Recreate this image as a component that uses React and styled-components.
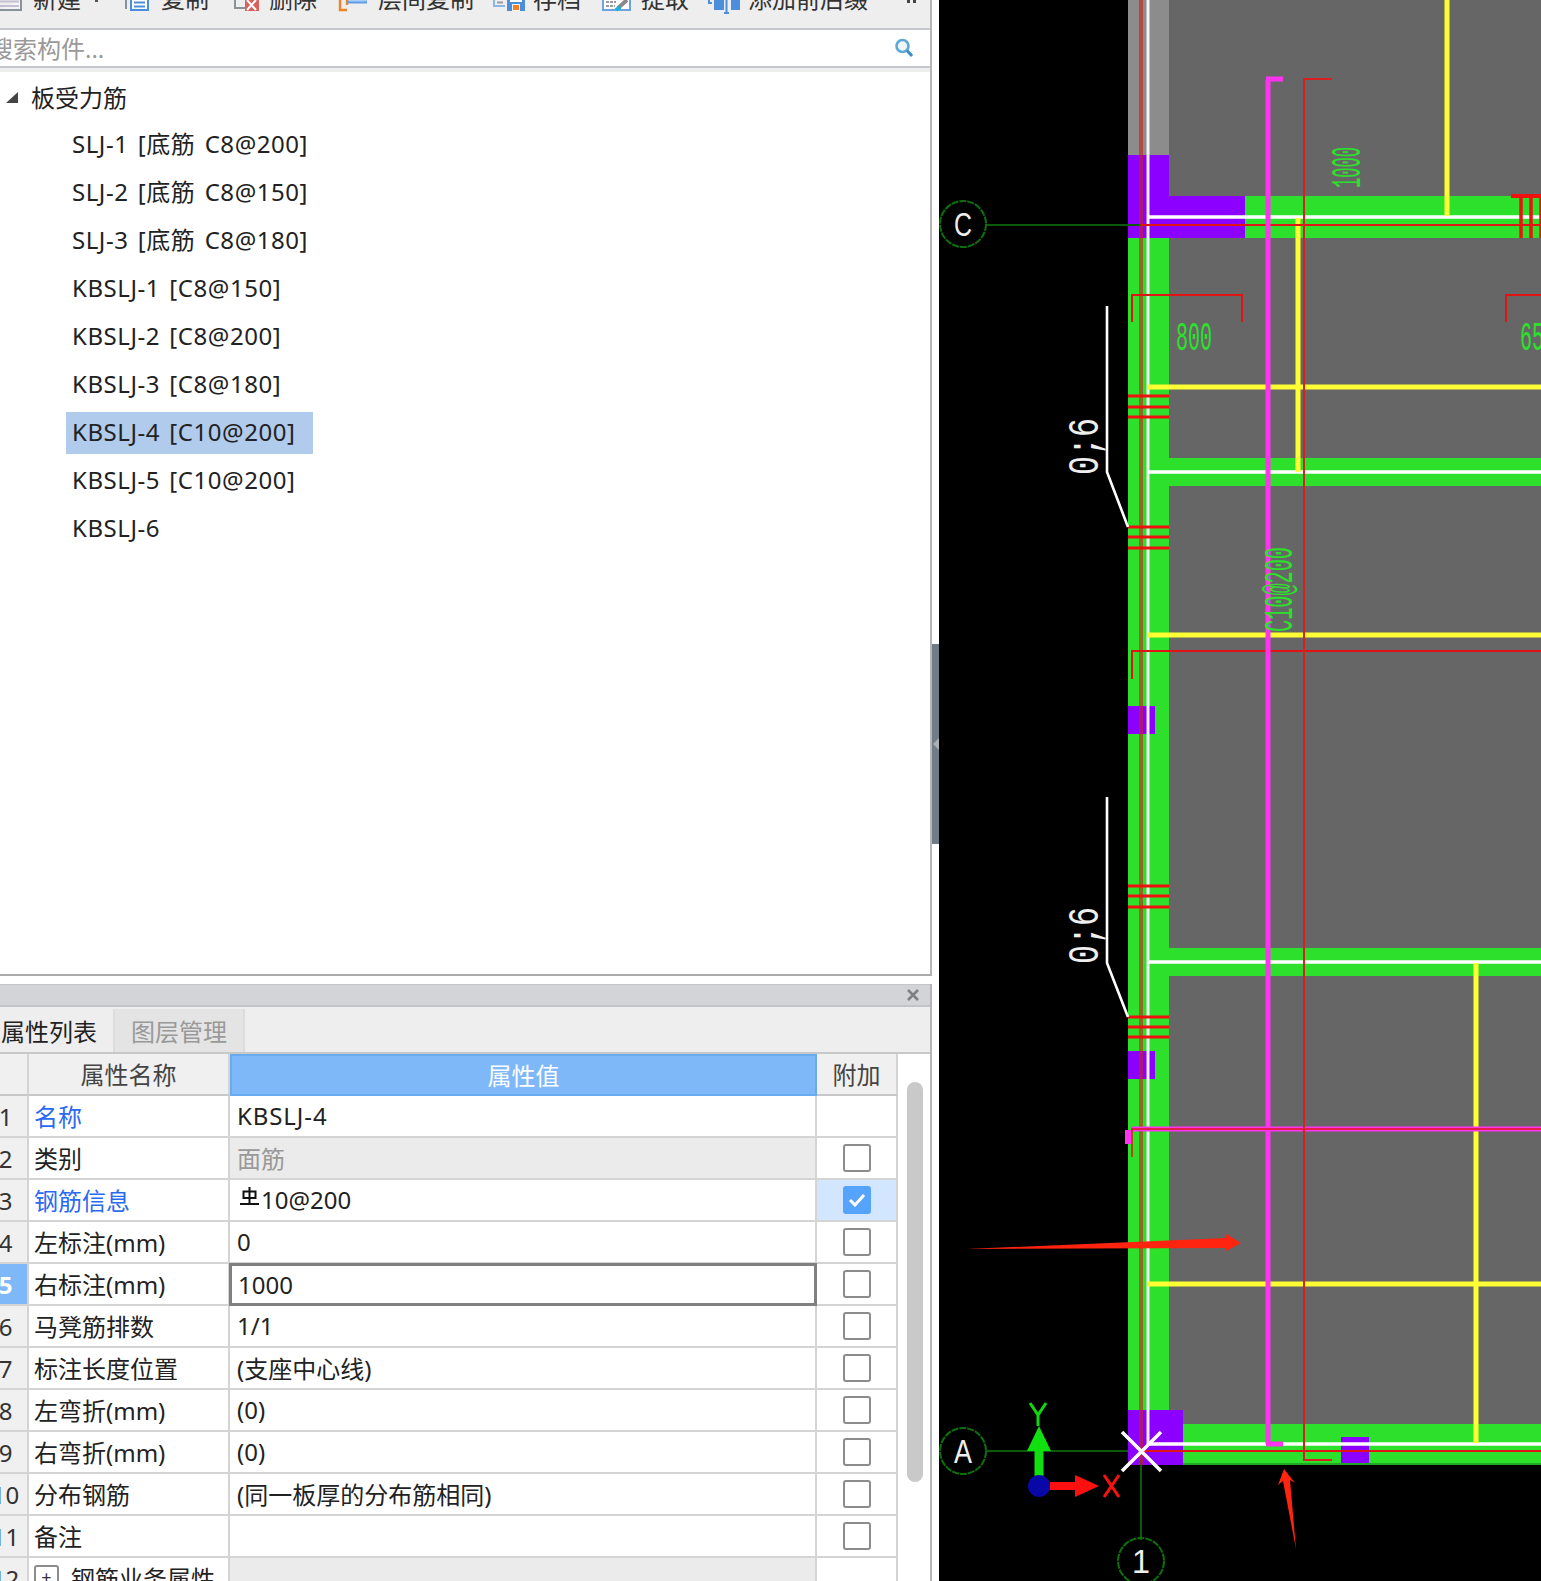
import React from 'react'
import styled, { createGlobalStyle } from 'styled-components'

const GlobalStyle = createGlobalStyle`
  html, body {
    margin: 0;
    padding: 0;
    background: #fff;
  }
  body {
    width: 1541px;
    height: 1581px;
    overflow: hidden;
    font-family: "Noto Sans", "Noto Sans CJK SC", sans-serif;
    font-size: 24px;
    color: #222;
  }
`

const Page = styled.div`
  display: flex;
  width: 1541px;
  height: 1581px;
  overflow: hidden;
`

const LeftColumn = styled.div`
  display: flex;
  flex-direction: column;
  width: 932px;
  flex: none;
`

const Gutter = styled.div`
  width: 7px;
  flex: none;
  padding-top: 644px;
  background: #fff;
`

const Grip = styled.div`
  position: relative;
  width: 7px;
  height: 200px;
  background: #6f7b86;
  &::after {
    content: '';
    position: absolute;
    left: 1px;
    top: 94px;
    border: 6px solid transparent;
    border-left-width: 0;
    border-right: 6px solid #aab0b6;
  }
`

const TreePanel = styled.div`
  display: flex;
  flex-direction: column;
  height: 976px;
  flex: none;
  border-right: 2px solid #b4b6b9;
  border-bottom: 2px solid #aaa;
  box-sizing: border-box;
`

const Toolbar = styled.div`
  display: flex;
  align-items: flex-end;
  height: 30px;
  flex: none;
  padding-bottom: 17px;
  box-sizing: border-box;
  background: #eee;
  border-bottom: 2px solid #c3c6ca;
  overflow: hidden;
`

const ToolButton = styled.div`
  display: flex;
  align-items: flex-end;
  flex: none;
  gap: ${p => p.$textGap}px;
  height: 24px;
  line-height: 24px;
  margin-left: ${p => p.$gap}px;
  color: #333;
  white-space: nowrap;
`

const Caret = styled.span`
  display: block;
  width: 3px;
  height: 3px;
  background: #555;
  margin: 0 0 9px 3px;
`

const More = styled.span`
  display: block;
  flex: none;
  width: 3px;
  height: 3px;
  margin: 0 0 8px 39px;
  border-left: 3px solid #444;
  border-right: 3px solid #444;
`

const SearchBar = styled.div`
  display: flex;
  align-items: center;
  justify-content: space-between;
  height: 38px;
  flex: none;
  box-sizing: border-box;
  padding-right: 16px;
  border-bottom: 2px solid #c3c6ca;
  background: #fff;
`

const Placeholder = styled.span`
  margin: -2px 0 0 -11px;
  color: #999;
`

const Strip = styled.div`
  height: 4px;
  flex: none;
  background: #eee;
`

const Tree = styled.div`
  flex: 1;
  padding-top: 1px;
  background: #fff;
`

const TreeRow = styled.div`
  display: flex;
  align-items: center;
  height: 48px;
  padding-left: ${p => p.$indent}px;
  color: #222;
`

const Expander = styled.span`
  width: 0;
  height: 0;
  margin-right: 13px;
  border-left: 12px solid transparent;
  border-bottom: 11px solid #444;
`

const RootLabel = styled.span`
  padding-bottom: 2px;
`

const NodeLabel = styled.span`
  display: block;
  height: 42px;
  line-height: 40px;
  padding: 0 ${p => (p.$selected ? 18 : 6)}px 0 6px;
  background: ${p => (p.$selected ? '#b0cbeb' : 'transparent')};
  white-space: nowrap;
  letter-spacing: 0.55px;
  word-spacing: 2.5px;
`

const PropsPanel = styled.div`
  display: flex;
  flex-direction: column;
  flex: 1;
  min-height: 0;
  margin-top: 8px;
  border-right: 2px solid #b4b6b9;
`

const TitleBar = styled.div`
  display: flex;
  align-items: center;
  justify-content: flex-end;
  height: 23px;
  flex: none;
  box-sizing: border-box;
  padding-right: 11px;
  background: #d3d4d8;
  border-top: 1px solid #c4c6ca;
  border-bottom: 2px solid #c2c4c8;
`

const TabRow = styled.div`
  display: flex;
  height: 47px;
  flex: none;
  box-sizing: border-box;
  background: #eee;
  border-bottom: 2px solid #c8c8c8;
`

const Tab = styled.div`
  display: flex;
  align-items: center;
  box-sizing: border-box;
  width: ${p => p.$width}px;
  padding: 0 0 1px ${p => p.$pad}px;
  margin-top: 2px;
  background: ${p => (p.$active ? '#eee' : '#e4e4e4')};
  color: ${p => (p.$active ? '#222' : '#999')};
  border-right: 2px solid #dcdcdc;
  white-space: nowrap;
`

const Body = styled.div`
  display: flex;
  flex: 1;
  min-height: 0;
`

const Grid = styled.div`
  width: 898px;
  flex: none;
`

const Row = styled.div`
  display: grid;
  grid-template-columns: 29px 201px 587px 81px;
  height: 42px;
`

const Cell = styled.div`
  display: flex;
  align-items: center;
  box-sizing: border-box;
  min-width: 0;
  overflow: hidden;
  white-space: nowrap;
  border-right: 2px solid #d4d4d4;
  border-bottom: 2px solid #d4d4d4;
`

const NumCell = styled(Cell)`
  justify-content: center;
  padding-right: 16px;
  background: ${p => (p.$active ? '#7eb8f8' : '#f0f0f0')};
  color: ${p => (p.$active ? '#fff' : '#333')};
  font-weight: ${p => (p.$active ? 700 : 400)};
`

const NameCell = styled(Cell)`
  padding: 0 0 2px 5px;
  background: #fff;
  color: ${p => (p.$link ? '#2a6af0' : '#222')};
`

const HeadCell = styled(Cell)`
  justify-content: center;
  padding-bottom: 2px;
  background: #f0f0f0;
  color: #444;
  border-bottom: 2px solid #c8c8c8;
`

const ValueHead = styled(HeadCell)`
  background: #7eb8f8;
  color: #fff;
  border: 2px solid #6aaaee;
`

const ValueCell = styled(Cell)`
  padding: 0 0 2px 7px;
  background: ${p => (p.$locked ? '#ebebeb' : '#fff')};
  color: ${p => (p.$locked ? '#999' : '#222')};
  letter-spacing: ${p => (p.$code ? '0.9px' : '0')};
  ${p => p.$editing && `
    padding: 0 0 0 6px;
    border: 3px solid #808080;
    margin: -1px 0 0 -1px;
  `}
`

const ExtraCell = styled(Cell)`
  justify-content: center;
  background: ${p => (p.$on ? '#d2e7ff' : '#fff')};
`

const CheckBox = styled.span`
  display: flex;
  align-items: center;
  justify-content: center;
  width: 28px;
  height: 28px;
  box-sizing: border-box;
  border-radius: 3px;
  border: 2px solid ${p => (p.$on ? '#55a3fb' : '#8c8c8c')};
  background: ${p => (p.$on ? '#55a3fb' : '#fff')};
`

const PlusBox = styled.span`
  display: flex;
  align-items: center;
  justify-content: center;
  width: 25px;
  height: 25px;
  margin-right: 12px;
  box-sizing: border-box;
  border: 2px solid #8c8c8c;
  border-radius: 3px;
  color: #333;
  font-size: 18px;
  line-height: 1;
`

const ScrollTrack = styled.div`
  flex: 1;
  padding: 28px 0 0 9px;
  background: #fff;
`

const ScrollThumb = styled.div`
  width: 16px;
  height: 400px;
  border-radius: 8px;
  background: #c9c9c9;
`

const Canvas = styled.div`
  flex: 1;
  min-width: 0;
  background: #000;
`

const DrawingSvg = styled.svg`
  display: block;
  width: 602px;
  height: 1581px;
`

const Icon = styled.svg`
  display: block;
  flex: none;
  overflow: visible;
`

const GradeMark = styled.svg`
  flex: none;
  margin: -6px 2px 0 3px;
`

const NewIcon = () => (
  <Icon width="22" height="11" viewBox="0 0 22 11">
    <path d="M21 0V10H0" fill="#f4f4f8" stroke="#8a9299" strokeWidth="2" />
    <path d="M0 1.5h19M0 6h19" stroke="#c5bfd2" strokeWidth="2" />
  </Icon>
)

const CopyIcon = () => (
  <Icon width="24" height="11" viewBox="0 0 24 11">
    <path d="M1 0v9" stroke="#8a9299" strokeWidth="2" />
    <path d="M6 0v10h17V0" fill="#fff" stroke="#4a8edc" strokeWidth="2" />
    <path d="M9 2.5h11M9 6.5h11" stroke="#4a8edc" strokeWidth="2" />
  </Icon>
)

const DeleteIcon = () => (
  <Icon width="27" height="11" viewBox="0 0 27 11">
    <path d="M3 0v8h10" fill="none" stroke="#8a9299" strokeWidth="2" />
    <rect x="13" y="0" width="14" height="11" fill="#d9605c" />
    <path d="M15 0l9 10M24 0l-9 10" stroke="#fff" strokeWidth="2" />
  </Icon>
)

const FloorCopyIcon = () => (
  <Icon width="28" height="11" viewBox="0 0 28 11">
    <path d="M1 0v10h7" fill="none" stroke="#f28029" strokeWidth="2.4" />
    <path d="M8 0v5" stroke="#f28029" strokeWidth="2.4" />
    <path d="M9 2h19" stroke="#5d9ee6" strokeWidth="3" />
    <path d="M10 0h17v1.5H10z" fill="#a8ccf5" />
  </Icon>
)

const SaveIcon = () => (
  <Icon width="32" height="11" viewBox="0 0 32 11">
    <path d="M1 0v6h11" fill="none" stroke="#8db6e6" strokeWidth="2" />
    <path d="M4 2.5h6" stroke="#9a9a9a" strokeWidth="2" />
    <rect x="14" y="0" width="18" height="11" fill="#4a8edc" />
    <rect x="17" y="0" width="12" height="2" fill="#fff" />
    <rect x="19" y="4" width="8" height="7" fill="#f4f4f4" />
    <rect x="20" y="5" width="6" height="5" fill="#f28029" />
  </Icon>
)

const ExtractIcon = () => (
  <Icon width="29" height="11" viewBox="0 0 29 11">
    <path d="M1 0v10h27V0" fill="#fff" stroke="#6fa3e0" strokeWidth="2" />
    <path d="M4 2h10M4 6h9" stroke="#999" strokeWidth="2" strokeDasharray="3 1" />
    <path d="M16 8L25 0" stroke="#888" strokeWidth="4" />
    <path d="M14 10l4-3" stroke="#14b6d8" strokeWidth="4" />
  </Icon>
)

const SuffixIcon = () => (
  <Icon width="32" height="11" viewBox="0 0 32 11">
    <path d="M1 0v3h3" fill="none" stroke="#4a8edc" strokeWidth="2" />
    <rect x="6" y="0" width="10" height="10" fill="#4a8edc" />
    <rect x="23" y="0" width="9" height="10" fill="#4a8edc" />
    <path d="M18.5 0v13M16 13h5" stroke="#4a8edc" strokeWidth="2" />
  </Icon>
)

const SearchGlyph = () => (
  <svg width="20" height="20" viewBox="0 0 20 20">
    <circle cx="8.5" cy="8" r="6" fill="#eef6fb" stroke="#5fa8d6" strokeWidth="2.6" />
    <path d="M13 12.5l5 5.5" stroke="#3b8cc4" strokeWidth="3" />
  </svg>
)

const CloseGlyph = () => (
  <svg width="12" height="12" viewBox="0 0 12 12">
    <path d="M1 1l10 10M11 1L1 11" stroke="#7d7f82" strokeWidth="2.6" />
  </svg>
)

const CheckGlyph = () => (
  <svg width="18" height="14" viewBox="0 0 18 14">
    <path d="M2 7l5 5 9-10" fill="none" stroke="#fff" strokeWidth="3" />
  </svg>
)

// HRB400 rebar grade mark, the app draws it with a private font
const GradeGlyph = () => (
  <GradeMark width="19" height="21" viewBox="0 0 19 21">
    <path d="M9.5 1v18M3.5 5.5h12v6.5h-12zM0 18h19" fill="none" stroke="#111" strokeWidth="2" />
  </GradeMark>
)

const TOOLS = [
  { label: '新建', icon: <NewIcon />, gap: 0, textGap: 11, caret: true },
  { label: '复制', icon: <CopyIcon />, gap: 27, textGap: 12 },
  { label: '删除', icon: <DeleteIcon />, gap: 23, textGap: 10 },
  { label: '层间复制', icon: <FloorCopyIcon />, gap: 22, textGap: 11 },
  { label: '存档', icon: <SaveIcon />, gap: 19, textGap: 8 },
  { label: '提取', icon: <ExtractIcon />, gap: 21, textGap: 10 },
  { label: '添加前后缀', icon: <SuffixIcon />, gap: 19, textGap: 8 },
]

const NODES = [
  'SLJ-1 [底筋 C8@200]',
  'SLJ-2 [底筋 C8@150]',
  'SLJ-3 [底筋 C8@180]',
  'KBSLJ-1 [C8@150]',
  'KBSLJ-2 [C8@200]',
  'KBSLJ-3 [C8@180]',
  'KBSLJ-4 [C10@200]',
  'KBSLJ-5 [C10@200]',
  'KBSLJ-6',
]

const ROWS = [
  { name: '名称', value: 'KBSLJ-4', link: true, noBox: true, code: true },
  { name: '类别', value: '面筋', locked: true },
  { name: '钢筋信息', value: '10@200', link: true, grade: true, on: true },
  { name: '左标注(mm)', value: '0' },
  { name: '右标注(mm)', value: '1000', editing: true },
  { name: '马凳筋排数', value: '1/1' },
  { name: '标注长度位置', value: '(支座中心线)' },
  { name: '左弯折(mm)', value: '(0)' },
  { name: '右弯折(mm)', value: '(0)' },
  { name: '分布钢筋', value: '(同一板厚的分布筋相同)' },
  { name: '备注', value: '' },
]

const GREEN = '#2ce02c'
const PURPLE = '#8c00ff'
const SLAB = '#666'
const YELLOW = '#ffff33'
const MAGENTA = '#ff33f0'
const RED = '#e01414'
const AXIS = '#0c5a0c'
const X0 = 939

// x, y, w, h, fill
const BLOCKS = [
  [1128, 0, 413, 1465, SLAB],
  [1128, 0, 41, 155, '#8c8c8c'],
  [1128, 238, 41, 1227, GREEN],
  [1169, 196, 372, 42, GREEN],
  [1128, 155, 41, 83, PURPLE],
  [1169, 196, 76, 42, PURPLE],
  [1169, 458, 372, 28, GREEN],
  [1169, 948, 372, 28, GREEN],
  [1128, 1424, 413, 41, GREEN],
  [1128, 706, 27, 28, PURPLE],
  [1128, 1051, 27, 28, PURPLE],
  [1128, 1410, 55, 55, PURPLE],
  [1341, 1437, 28, 28, PURPLE],
  [1183, 1463, 358, 2, '#21a821'],
]

const REBAR_TICKS = [396, 407, 417, 527, 537, 548, 886, 896, 907, 1017, 1027, 1037]

const GridMark = ({ cx, cy, label }) => (
  <g>
    <circle cx={cx} cy={cy} r="23" fill="none" stroke="#0d700d" strokeWidth="2" strokeDasharray="7 1" />
    <text x={cx} y={cy + 12} fill="#eee" fontFamily="Liberation Sans, sans-serif" fontSize="34" textAnchor="middle" textLength="18" lengthAdjust="spacingAndGlyphs">
      {label}
    </text>
  </g>
)

const CadText = ({ x, y, len, size, fill, rotate, children }) => (
  <text
    x={x}
    y={y}
    fill={fill}
    fontFamily="Liberation Mono, monospace"
    fontSize={size}
    textLength={len}
    lengthAdjust="spacingAndGlyphs"
    transform={rotate ? `rotate(-90 ${x} ${y})` : undefined}
  >
    {children}
  </text>
)

const Drawing = () => (
  <DrawingSvg viewBox={`${X0} 0 602 1581`}>
    {BLOCKS.map(([x, y, w, h, fill], i) => (
      <rect key={i} x={x} y={y} width={w} height={h} fill={fill} />
    ))}

    {/* support centre lines */}
    <path d="M1148 0V1444" stroke="#f4f4f4" strokeWidth="3" />
    <path d="M1148 217H1541M1148 472H1541M1148 962H1541M1148 1444H1541" stroke="#fff" strokeWidth="3.5" />

    {/* yellow bars */}
    <path d="M1447 0V216M1298 218V472M1476 963V1443" stroke={YELLOW} strokeWidth="5" />
    <path d="M1148 387H1541M1148 635H1541M1148 1284H1541" stroke={YELLOW} strokeWidth="5" />

    {/* grid axes */}
    <path d="M986 225H1141M986 1451H1128M1141 1460V1540" stroke={AXIS} strokeWidth="2" />
    <path d="M1141 0V1465" stroke="#c8241c" strokeWidth="4" opacity="0.62" />
    <path d="M1141 225H1541M1141 1451H1541" stroke={RED} strokeWidth="2" />

    {/* rebar ticks */}
    {REBAR_TICKS.map(y => (
      <path key={y} d={`M1128 ${y}H1169`} stroke="#f01010" strokeWidth="3.2" />
    ))}
    <path d="M1511 196H1541" stroke="#f01010" strokeWidth="4" />
    <path d="M1521 196V238M1531 196V238M1541 196V238" stroke="#f01010" strokeWidth="3.5" />

    {/* dimension brackets */}
    <path d="M1132 322V295H1242V322M1506 322V295H1541" fill="none" stroke={RED} strokeWidth="2" />
    <path d="M1132 679V651H1541" fill="none" stroke={RED} strokeWidth="2" />

    {/* magenta bar and its hooks */}
    <path d="M1268 80V1444" stroke={MAGENTA} strokeWidth="5" />
    <path d="M1266 79H1283M1266 1444H1283" stroke={MAGENTA} strokeWidth="5" />
    <path d="M1131 1129H1541" stroke={MAGENTA} strokeWidth="5" />
    <path d="M1128 1130V1144" stroke={MAGENTA} strokeWidth="6" />
    <path d="M1132 1157V1129H1541" fill="none" stroke={RED} strokeWidth="1.5" />

    {/* thin red selected bar */}
    <path d="M1332 79H1304V1460H1332" fill="none" stroke="#d82020" strokeWidth="2" />

    {/* leaders */}
    <path d="M1107 306V472L1128 527M1107 797V963L1128 1017" fill="none" stroke="#fff" strokeWidth="2.6" />

    {/* cad texts */}
    <CadText x={1098} y={475} len={57} size={44} fill="#eee" rotate>0;6</CadText>
    <CadText x={1098} y={964} len={57} size={44} fill="#eee" rotate>0;6</CadText>
    <CadText x={1176} y={350} len={36} size={40} fill={GREEN}>800</CadText>
    <CadText x={1520} y={350} len={24} size={40} fill={GREEN}>65</CadText>
    <CadText x={1360} y={188} len={41} size={42} fill={GREEN} rotate>1000</CadText>
    <CadText x={1292} y={632} len={85} size={40} fill={GREEN} rotate>C10@200</CadText>

    <GridMark cx={963} cy={224} label="C" />
    <GridMark cx={963} cy={1451} label="A" />
    <GridMark cx={1141} cy={1561} label="1" />

    {/* insertion point */}
    <path d="M1122 1432L1161 1471M1161 1432L1122 1471" stroke="#fff" strokeWidth="3.5" />

    {/* UCS gizmo */}
    <path d="M1039 1478V1448" stroke="#10e010" strokeWidth="9" />
    <path d="M1039 1426L1051 1451H1027Z" fill="#10e010" />
    <path d="M1050 1486H1076" stroke="#ff1010" strokeWidth="8" />
    <path d="M1099 1486L1075 1475V1497Z" fill="#ff1010" />
    <circle cx="1039" cy="1486" r="11" fill="#0808a8" />
    <path d="M1030 1403L1038 1415L1046 1403M1038 1415V1426" fill="none" stroke="#10d810" strokeWidth="3" />
    <path d="M1104 1475L1119 1497M1119 1475L1104 1497" fill="none" stroke="#ff1010" strokeWidth="3" />

    {/* hand drawn markup arrows */}
    <path d="M966 1249L1226 1238L1226 1234L1241 1243L1226 1251L1226 1248Z" fill="#ff2410" />
    <path d="M1284 1469L1295 1483L1290 1480L1296 1549L1283 1481L1278 1485Z" fill="#ff2410" />
  </DrawingSvg>
)

export default function App() {
  return (
    <>
      <GlobalStyle />
      <Page>
        <LeftColumn>
          <TreePanel>
            <Toolbar>
              {TOOLS.map(t => (
                <ToolButton key={t.label} $gap={t.gap} $textGap={t.textGap}>
                  {t.icon}
                  <span>{t.label}</span>
                  {t.caret && <Caret />}
                </ToolButton>
              ))}
              <More />
            </Toolbar>
            <SearchBar>
              <Placeholder>搜索构件...</Placeholder>
              <SearchGlyph />
            </SearchBar>
            <Strip />
            <Tree>
              <TreeRow $indent={6}>
                <Expander />
                <RootLabel>板受力筋</RootLabel>
              </TreeRow>
              {NODES.map(n => (
                <TreeRow key={n} $indent={66}>
                  <NodeLabel $selected={n.startsWith('KBSLJ-4')}>{n}</NodeLabel>
                </TreeRow>
              ))}
            </Tree>
          </TreePanel>

          <PropsPanel>
            <TitleBar>
              <CloseGlyph />
            </TitleBar>
            <TabRow>
              <Tab $active $width={115} $pad={1}>属性列表</Tab>
              <Tab $width={130} $pad={16}>图层管理</Tab>
            </TabRow>
            <Body>
              <Grid>
                <Row>
                  <HeadCell />
                  <HeadCell>属性名称</HeadCell>
                  <ValueHead>属性值</ValueHead>
                  <HeadCell>附加</HeadCell>
                </Row>
                {ROWS.map((r, i) => (
                  <Row key={r.name}>
                    <NumCell $active={r.editing}>{i + 1}</NumCell>
                    <NameCell $link={r.link}>{r.name}</NameCell>
                    <ValueCell $locked={r.locked} $editing={r.editing} $code={r.code}>
                      {r.grade && <GradeGlyph />}
                      {r.value}
                    </ValueCell>
                    <ExtraCell $on={r.on}>
                      {!r.noBox && <CheckBox $on={r.on}>{r.on && <CheckGlyph />}</CheckBox>}
                    </ExtraCell>
                  </Row>
                ))}
                <Row>
                  <NumCell>12</NumCell>
                  <NameCell>
                    <PlusBox>+</PlusBox>
                    钢筋业务属性
                  </NameCell>
                  <ValueCell $locked />
                  <ExtraCell />
                </Row>
              </Grid>
              <ScrollTrack>
                <ScrollThumb />
              </ScrollTrack>
            </Body>
          </PropsPanel>
        </LeftColumn>
        <Gutter>
          <Grip />
        </Gutter>
        <Canvas>
          <Drawing />
        </Canvas>
      </Page>
    </>
  )
}
